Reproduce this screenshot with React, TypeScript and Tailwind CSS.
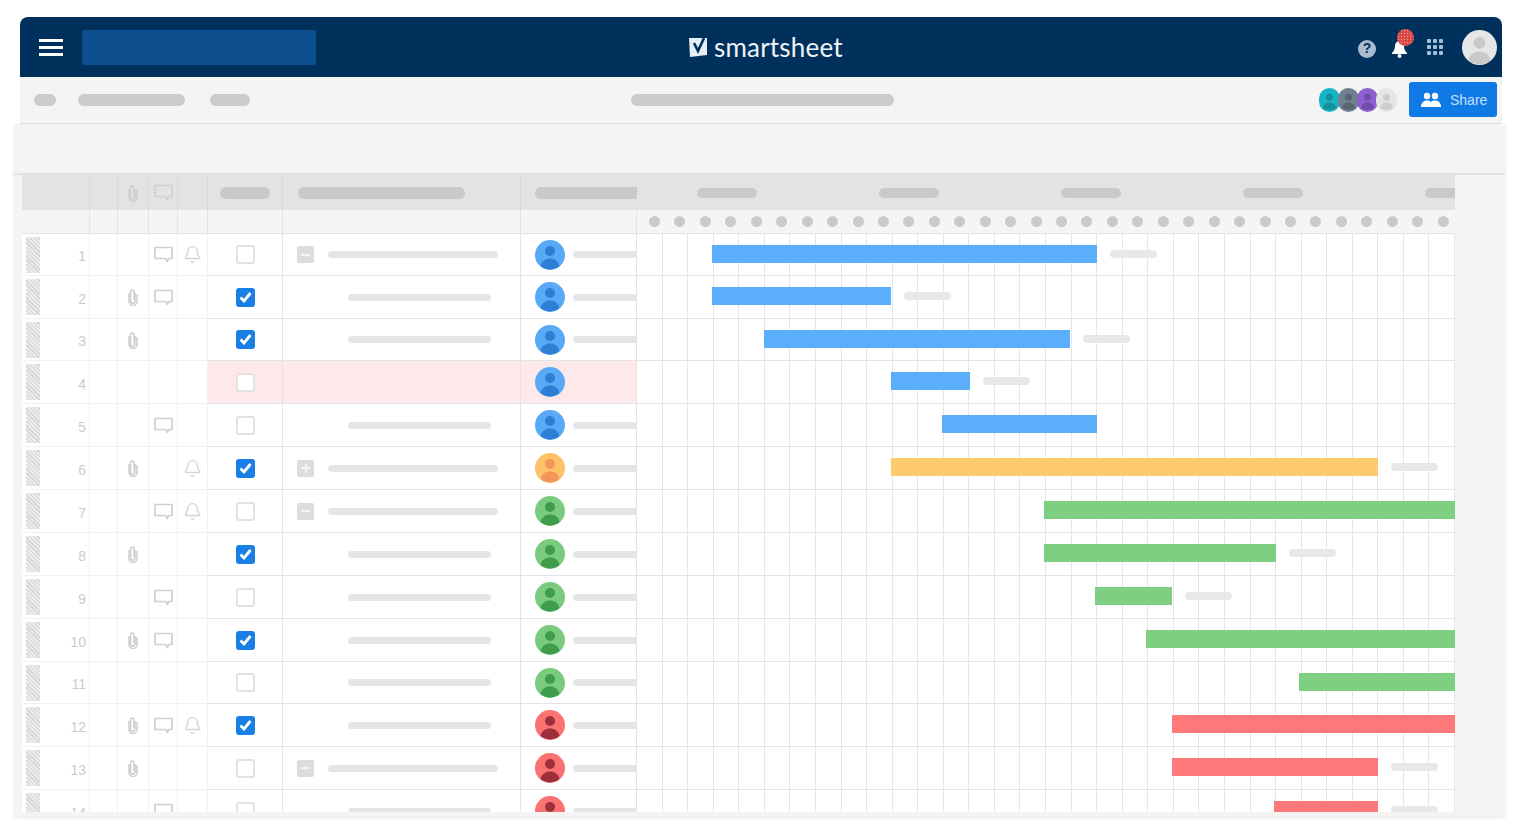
import React from 'react';
import { Bell } from 'lucide-react';

type Row = {
  clip?: boolean;
  comment?: boolean;
  bell?: boolean;
  checked?: boolean;
  toggle?: 'plus' | 'minus';
  task?: 'parent' | 'child';
  color: 'blue' | 'orange' | 'green' | 'red';
  height: number;
  bar: [number, number];
  label?: boolean;
  pink?: boolean;
};

const rows: Row[] = [
  { comment: true, bell: true, toggle: 'minus', task: 'parent', color: 'blue', height: 42, bar: [712, 1097], label: true },
  { clip: true, comment: true, checked: true, task: 'child', color: 'blue', height: 43, bar: [712, 891], label: true },
  { clip: true, checked: true, task: 'child', color: 'blue', height: 42, bar: [764, 1070], label: true },
  { color: 'blue', height: 43, bar: [891, 970], label: true, pink: true },
  { comment: true, task: 'child', color: 'blue', height: 43, bar: [942, 1097] },
  { clip: true, bell: true, checked: true, toggle: 'plus', task: 'parent', color: 'orange', height: 43, bar: [891, 1378], label: true },
  { comment: true, bell: true, toggle: 'minus', task: 'parent', color: 'green', height: 43, bar: [1044, 1455] },
  { clip: true, checked: true, task: 'child', color: 'green', height: 43, bar: [1044, 1276], label: true },
  { comment: true, task: 'child', color: 'green', height: 43, bar: [1095, 1172], label: true },
  { clip: true, comment: true, checked: true, task: 'child', color: 'green', height: 43, bar: [1146, 1455] },
  { task: 'child', color: 'green', height: 42, bar: [1299, 1455] },
  { clip: true, comment: true, bell: true, checked: true, task: 'child', color: 'red', height: 43, bar: [1172, 1455] },
  { clip: true, toggle: 'minus', task: 'parent', color: 'red', height: 43, bar: [1172, 1378], label: true },
  { comment: true, task: 'child', color: 'red', height: 43, bar: [1274, 1378], label: true },
];

const barColors = { blue: 'bg-[#5aaefb]', orange: 'bg-[#fdca6e]', green: 'bg-[#7fcf82]', red: 'bg-[#fd7878]' };
const avatarFills = {
  blue: ['#58a9f6', '#2d7fd6'],
  orange: ['#fdc168', '#f2965c'],
  green: ['#7bcb7f', '#3f9c4c'],
  red: ['#fb7272', '#9c3038'],
};

const GRID = 'grid w-[1433px] grid-cols-[68px_28px_31px_29px_30px_75px_238px_116px_818px]';
const cell = 'border-r border-[#e2e2e2] flex items-center justify-center';

const Clip = () => (
  <svg width="12" height="18" viewBox="0 0 12 18" fill="none" stroke="#cdcdcd" strokeWidth="1.5">
    <path d="M8 5v8a2.200 2.200 0 0 1-4.400 0V3.800a1.700 1.700 0 0 1 3.400 0V12" />
    <path d="M2 5v8.500a4 4 0 0 0 8 0V6" />
  </svg>
);

const Comment = () => (
  <svg width="19" height="17" viewBox="0 0 19 17" fill="none" stroke="#d0d0d0" strokeWidth="1.700">
    <path d="M1 1.500h17v11h-3.500l-1 3-2-3H1z" strokeLinejoin="round" />
  </svg>
);

const Person = ({ color }: { color: string }) => (
  <svg viewBox="0 0 30 30" className="w-full h-full">
    <circle cx="15" cy="11" r="5" fill={color} />
    <path d="M5.500 26c1-5 5-7.500 9.500-7.500s8.500 2.500 9.500 7.500a15 15 0 0 1-19 0z" fill={color} />
  </svg>
);

const TwoPeople = () => (
  <svg width="20" height="16" viewBox="0 0 20 16" fill="#fff">
    <circle cx="6" cy="4" r="3.200" />
    <circle cx="14" cy="4" r="3.200" />
    <path d="M0 15c0-4 2.500-6.500 6-6.500 1.500 0 2.800.500 3.600 1.400L8.500 15z" />
    <path d="M7.500 15c0-4 2.800-6.500 6.500-6.500s6 2.500 6 6.500z" />
  </svg>
);

const Avatar = ({ color }: { color: Row['color'] }) => (
  <div className="w-[30px] h-[30px] rounded-full overflow-hidden shrink-0" style={{ backgroundColor: avatarFills[color][0] }}>
    <Person color={avatarFills[color][1]} />
  </div>
);

const Checkbox = ({ checked }: { checked?: boolean }) =>
  checked ? (
    <div className="w-[19px] h-[19px] rounded-[3px] bg-[#1a7fe5] flex items-center justify-center">
      <svg width="13" height="11" viewBox="0 0 13 11" fill="none" stroke="#fff" strokeWidth="2.800">
        <path d="M1.500 5.500l3.500 3.500 6.500-8" />
      </svg>
    </div>
  ) : (
    <div className="w-[19px] h-[19px] rounded-[3px] border-2 border-[#e2e2e2] bg-white" />
  );

const Toggle = ({ kind }: { kind: 'plus' | 'minus' }) => (
  <div className="relative w-[17px] h-[17px] rounded-[2px] bg-[#dcdcdc] flex items-center justify-center shrink-0">
    <div className="w-[9px] h-[2px] bg-[#f4f4f4]" />
    {kind === 'plus' && <div className="absolute w-[2px] h-[9px] bg-[#f4f4f4]" />}
  </div>
);

const Pill = ({ className }: { className: string }) => <div className={`rounded-full ${className}`} />;

const GanttRow = ({ row }: { row: Row }) => (
  <div className="relative border-b border-[#e4e4e4]">
    <div className="grid grid-cols-[repeat(32,1fr)] h-full">
      {Array.from({ length: 32 }).map((_, i) => (
        <div key={i} className="border-r border-[#e6e6e6]" />
      ))}
    </div>
    <div className="absolute inset-0 flex items-center overflow-hidden pb-[2px]">
      <div className={`h-[18px] shrink-0 ${barColors[row.color]}`} style={{ marginLeft: row.bar[0] - 637, width: row.bar[1] - row.bar[0] }} />
      {row.label && <Pill className="ml-[13px] w-[47px] h-[8px] bg-[#e8e8e8] shrink-0" />}
    </div>
  </div>
);

const TableRow = ({ row, index }: { row: Row; index: number }) => {
  const line = 'border-b border-[#e4e4e4]';
  const soft = 'border-b border-[#f1f1f1]';
  const tint = row.pink ? 'bg-[#fde8ea]' : '';
  return (
    <div className={`${GRID} bg-white`} style={{ height: row.height }}>
      <div className={`${cell} ${soft} !justify-between pl-[4px] pr-[3px]`}>
        <div className="w-[14px] h-[36px] bg-[repeating-linear-gradient(45deg,#d4d4d4_0,#d4d4d4_1px,#ebebeb_1px,#ebebeb_3px)]" />
        <span className="text-sm text-[#cccccc] font-['Liberation_Sans',sans-serif] pt-[3px]">{index + 1}</span>
      </div>
      <div className={`${cell} ${soft}`} />
      <div className={`${cell} ${soft}`}>{row.clip && <Clip />}</div>
      <div className={`${cell} ${soft}`}>{row.comment && <Comment />}</div>
      <div className={`${cell} ${soft}`}>{row.bell && <Bell size={19} strokeWidth={1.700} className="text-[#d4d4d4]" />}</div>
      <div className={`${cell} ${line} ${tint}`}><Checkbox checked={row.checked} /></div>
      <div className={`${cell} ${line} ${tint} !justify-start`}>
        {row.task === 'parent' && (
          <div className="flex items-center pl-[14px]">
            {row.toggle && <Toggle kind={row.toggle} />}
            <Pill className="ml-[14px] w-[170px] h-[7px] bg-[#e5e5e5]" />
          </div>
        )}
        {row.task === 'child' && <Pill className="ml-[65px] w-[143px] h-[7px] bg-[#e5e5e5]" />}
      </div>
      <div className={`${cell} ${line} ${tint} !justify-start pl-[14px]`}>
        <Avatar color={row.color} />
        {!row.pink && <Pill className="ml-[8px] flex-1 h-[7px] !rounded-r-none bg-[#e5e5e5]" />}
      </div>
      <GanttRow row={row} />
    </div>
  );
};

const App = () => {
  return (
    <div className="h-[830px] w-[1516px] overflow-hidden bg-white pt-[17px] font-['Liberation_Sans',sans-serif]">
      {/* top bar */}
      <header className="mx-[20px] h-[60px] w-[1482px] rounded-t-lg bg-[#00305c] flex items-center pl-[19px] pr-[5px]">
        <div className="flex flex-col gap-[4px] w-[24px]">
          <div className="h-[3px] bg-white" />
          <div className="h-[3px] bg-white" />
          <div className="h-[3px] bg-white" />
        </div>
        <div className="ml-[19px] w-[234px] h-[35px] rounded-[2px] bg-[#0e4f8f]" />
        <div className="ml-[373px] flex items-center">
          <svg width="19" height="22" viewBox="0 0 19 22">
            <path d="M0 2h18v17L1 21z" fill="#e8eef4" />
            <path d="M5 7l4 8 6-13" fill="none" stroke="#00305c" strokeWidth="2.600" />
          </svg>
          <span className="ml-[6px] text-[26px] leading-none tracking-[0.2px] text-[#eef3f8] font-['Lato',sans-serif]">smartsheet</span>
        </div>
        <div className="ml-auto flex items-center">
          <div className="w-[18px] h-[18px] mt-[3px] rounded-full bg-[#a9bccd] flex items-center justify-center text-[14px] font-bold text-[#00305c]">?</div>
          <div className="relative ml-[15px] mt-[3px] w-[17px] h-[18px]">
            <svg width="17" height="18" viewBox="0 0 17 18" fill="#fff">
              <path d="M8.500 1c3 0 4.500 2.500 4.500 5.500 0 3 1.500 5 3 6.500v1H1v-1c1.500-1.500 3-3.500 3-6.500S5.500 1 8.500 1z" />
              <circle cx="8.500" cy="16" r="2" />
            </svg>
            <div className="absolute -top-[11px] left-[6px] w-[17px] h-[17px] rounded-full bg-[#d94a4a] bg-[radial-gradient(#ff9c9c_1px,transparent_1px)] bg-[length:3px_3px]" />
          </div>
          <div className="ml-[19px] grid grid-cols-3 gap-[2px]">
            {Array.from({ length: 9 }).map((_, i) => (
              <div key={i} className="w-[4px] h-[4px] rounded-[1px] bg-[#a5bdd6]" />
            ))}
          </div>
          <div className="ml-[19px] w-[35px] h-[35px] rounded-full overflow-hidden bg-[#e6e6e6]">
            <Person color="#c9c9c9" />
          </div>
        </div>
      </header>

      {/* toolbar */}
      <div className="mx-[20px] h-[47px] w-[1482px] bg-[#f5f4f5] border-b border-[#dedede] flex items-center pl-[14px] pr-[5px]">
        <Pill className="w-[22px] h-[12px] bg-[#cbcbcb]" />
        <Pill className="ml-[22px] w-[107px] h-[12px] bg-[#cbcbcb]" />
        <Pill className="ml-[25px] w-[40px] h-[12px] bg-[#cbcbcb]" />
        <Pill className="ml-[381px] w-[263px] h-[12px] bg-[#cbcbcb]" />
        <div className="ml-auto flex items-center">
          {['#19b4c4', '#6f8090', '#8e5fd0', '#e6e6e6'].map((c, i) => (
            <div key={c} className={`w-[21px] h-[24px] rounded-full overflow-hidden ${i > 0 ? '-ml-[2px]' : ''}`} style={{ backgroundColor: c }}>
              <Person color={i === 3 ? '#cccccc' : '#00000033'} />
            </div>
          ))}
          <button className="ml-[12px] mb-[1px] w-[88px] h-[35px] rounded-[3px] bg-[#0f7ae5] flex items-center pl-[12px]">
            <TwoPeople />
            <span className="ml-[9px] text-sm text-[#c4dffa]">Share</span>
          </button>
        </div>
      </div>

      {/* sheet */}
      <main className="mx-[14px] w-[1491px] h-[692px] bg-[#f4f4f5] shadow-[0_2px_4px_rgba(0,0,0,0.08)]">
        <div className="h-[51px] border-b-2 border-[#e2e2e2]" />
        <div className="pl-[8px]">
          <div className={`${GRID} h-[35px] bg-[#e3e3e3]`}>
            <div className="border-r border-[#dadada]" />
            <div className="border-r border-[#dadada]" />
            <div className="border-r border-[#dadada] flex items-center justify-center"><Clip /></div>
            <div className="border-r border-[#dadada] flex items-center justify-center"><Comment /></div>
            <div className="border-r border-[#dadada]" />
            <div className="flex items-center justify-center border-r border-[#dadada]"><Pill className="w-[50px] h-[12px] bg-[#c9c9c9]" /></div>
            <div className="flex items-center pl-[15px] border-r border-[#dadada]"><Pill className="w-[167px] h-[12px] bg-[#c9c9c9]" /></div>
            <div className="flex items-center pl-[14px]"><Pill className="w-full h-[12px] !rounded-r-none bg-[#c9c9c9]" /></div>
            <div className="flex items-center overflow-hidden pl-[60px] gap-[122px]">
              {[60, 60, 60, 60, 41].map((w, i) => (
                <div key={i} className="h-[10px] rounded-full bg-[#c9c9c9] shrink-0" style={{ width: w }} />
              ))}
            </div>
          </div>
          <div className={`${GRID} h-[24px] bg-[#f5f5f5] border-b border-[#e4e4e4]`}>
            {Array.from({ length: 8 }).map((_, i) => (
              <div key={i} className="border-r border-[#e4e4e4]" />
            ))}
            <div className="flex items-center justify-between pl-[12px] pr-[6px]">
              {Array.from({ length: 32 }).map((_, i) => (
                <div key={i} className="w-[11px] h-[11px] rounded-full bg-[#cacaca]" />
              ))}
            </div>
          </div>
          <div className="h-[578px] overflow-hidden">
            {rows.map((row, i) => (
              <TableRow key={i} row={row} index={i} />
            ))}
          </div>
        </div>
      </main>
    </div>
  );
};

export default App;
